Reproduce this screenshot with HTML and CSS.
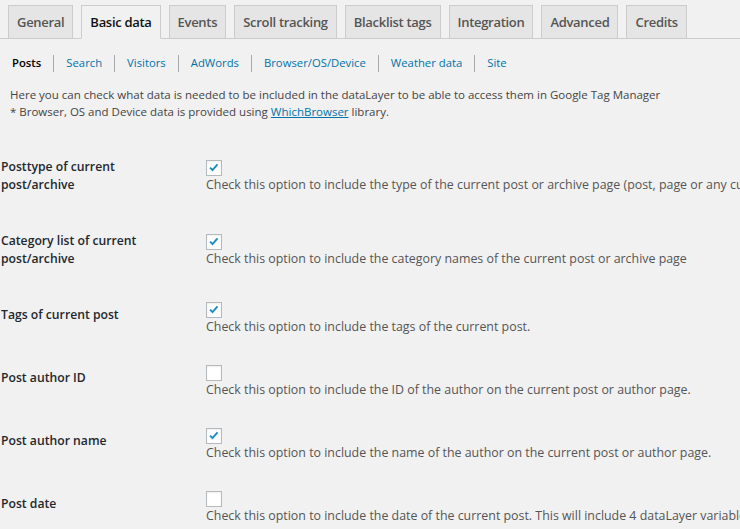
FILE: index.html
```html
<!DOCTYPE html>
<html>
<head>
<meta charset="utf-8">
<link rel="stylesheet" href="styles.css">
</head>
<body>
<div class="wrap">
  <nav class="tabs">
    <a class="tab">General</a>
    <a class="tab active">Basic data</a>
    <a class="tab">Events</a>
    <a class="tab">Scroll tracking</a>
    <a class="tab">Blacklist tags</a>
    <a class="tab">Integration</a>
    <a class="tab">Advanced</a>
    <a class="tab">Credits</a>
  </nav>
  <ul class="subnav">
    <li class="current">Posts</li>
    <li class="sep"></li>
    <li><a>Search</a></li>
    <li class="sep"></li>
    <li><a>Visitors</a></li>
    <li class="sep"></li>
    <li><a>AdWords</a></li>
    <li class="sep"></li>
    <li><a>Browser/OS/Device</a></li>
    <li class="sep"></li>
    <li><a>Weather data</a></li>
    <li class="sep"></li>
    <li><a>Site</a></li>
  </ul>
  <p class="intro">Here you can check what data is needed to be included in the dataLayer to be able to access them in Google Tag Manager<br>* Browser, OS and Device data is provided using <a class="ulink">WhichBrowser</a> library.</p>

  <div class="form">
    <div class="row">
      <div class="label">Posttype of current<br>post/archive</div>
      <div class="field">
        <span class="cb checked"><svg viewBox="0 0 16 16" width="14" height="14"><path d="M3.5 7.5 L6.3 10.3 L12 3.8" fill="none" stroke="#1e8cbe" stroke-width="2.2"/></svg></span>
        <div class="desc">Check this option to include the type of the current post or archive page (post, page or any custom post type).</div>
      </div>
    </div>
    <div class="row">
      <div class="label">Category list of current<br>post/archive</div>
      <div class="field">
        <span class="cb checked"><svg viewBox="0 0 16 16" width="14" height="14"><path d="M3.5 7.5 L6.3 10.3 L12 3.8" fill="none" stroke="#1e8cbe" stroke-width="2.2"/></svg></span>
        <div class="desc">Check this option to include the category names of the current post or archive page</div>
      </div>
    </div>
    <div class="row">
      <div class="label">Tags of current post</div>
      <div class="field">
        <span class="cb checked"><svg viewBox="0 0 16 16" width="14" height="14"><path d="M3.5 7.5 L6.3 10.3 L12 3.8" fill="none" stroke="#1e8cbe" stroke-width="2.2"/></svg></span>
        <div class="desc">Check this option to include the tags of the current post.</div>
      </div>
    </div>
    <div class="row">
      <div class="label">Post author ID</div>
      <div class="field">
        <span class="cb"></span>
        <div class="desc">Check this option to include the ID of the author on the current post or author page.</div>
      </div>
    </div>
    <div class="row">
      <div class="label">Post author name</div>
      <div class="field">
        <span class="cb checked"><svg viewBox="0 0 16 16" width="14" height="14"><path d="M3.5 7.5 L6.3 10.3 L12 3.8" fill="none" stroke="#1e8cbe" stroke-width="2.2"/></svg></span>
        <div class="desc">Check this option to include the name of the author on the current post or author page.</div>
      </div>
    </div>
    <div class="row">
      <div class="label">Post date</div>
      <div class="field">
        <span class="cb"></span>
        <div class="desc">Check this option to include the date of the current post. This will include 4 dataLayer variables: full date, post year, post month, post date.</div>
      </div>
    </div>
  </div>
</div>
</body>
</html>
```

FILE: styles.css
```css
html, body {
  margin: 0;
  padding: 0;
  overflow: hidden;
  background: #f1f1f1;
}
body {
  font-family: "Open Sans", "Noto Sans", sans-serif;
  font-size: 12.4px;
  color: #444;
}
.wrap {
  width: 1100px;
}
.tabs {
  display: flex;
  gap: 8px;
  padding: 5px 0 0 8px;
  border-bottom: 1px solid #ccc;
}
.tab {
  display: block;
  padding: 0 8px;
  height: 32px;
  line-height: 32px;
  margin-bottom: -1px;
  border: 1px solid #ccc;
  background: #e5e5e5;
  color: #555;
  font-size: 13px;
  letter-spacing: -0.3px;
  font-weight: 600;
  white-space: nowrap;
}
.tab.active {
  background: #f1f1f1;
  border-bottom-color: #f1f1f1;
  color: #111;
}
.subnav {
  list-style: none;
  margin: 0;
  padding: 15px 0 0 12px;
  display: flex;
  align-items: center;
  gap: 12px;
  height: 18px;
  line-height: 18px;
  font-size: 11.3px;
}
.subnav a {
  color: #0073aa;
}
.subnav .current {
  color: #000;
  font-weight: 600;
}
.subnav .sep {
  width: 1px;
  height: 17px;
  background: #a7aaad;
}
.intro {
  margin: 14px 0 0 10px;
  line-height: 17px;
  font-size: 11.5px;
  color: #444;
}
.ulink {
  color: #0073aa;
  text-decoration: underline;
}
.form {
  padding-top: 19px;
}
.row {
  display: flex;
  padding-left: 1px;
}
.label {
  width: 205px;
  flex: none;
  padding: 19px 0;
  font-size: 12.2px;
  font-weight: 600;
  color: #23282d;
  line-height: 18px;
}
.field {
  display: flex;
  flex-direction: column;
  justify-content: center;
  padding: 15px 0;
}
.cb {
  width: 14px;
  height: 14px;
  border: 1px solid #b4b9be;
  background: #fff;
  box-shadow: inset 0 1px 2px rgba(0,0,0,.07);
  display: flex;
  align-items: center;
  justify-content: center;
}
.desc {
  white-space: nowrap;
  line-height: 17px;
  color: #555;
}
```
